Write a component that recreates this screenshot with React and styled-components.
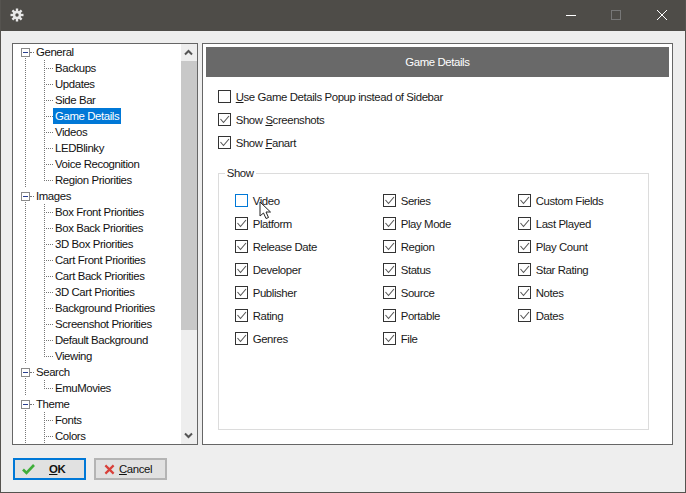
import React from 'react';
import styled, { createGlobalStyle } from 'styled-components';

const GlobalStyle = createGlobalStyle`
  html, body {
    margin: 0;
    padding: 0;
    background: #eeeeee;
  }
  body {
    font-family: "Liberation Sans", Arial, sans-serif;
    font-size: 11.4px;
    letter-spacing: -0.4px;
    color: #1a1a1a;
  }
`;

const Win = styled.div`
  position: relative;
  width: 686px;
  height: 493px;
  box-sizing: border-box;
  border: 1px solid #55534f;
  border-top: none;
  background: #eeeeee;
  display: flex;
  flex-direction: column;
  overflow: hidden;
`;

const TitleBar = styled.div`
  height: 31px;
  box-sizing: border-box;
  margin: 0 -1px;
  flex: none;
  background: #4e4c48;
  display: flex;
  align-items: center;
  padding: 0 1px 1px 10px;
`;

const WinButtons = styled.div`
  margin-left: auto;
  display: flex;
`;

const WinButton = styled.div`
  width: ${(p) => p.$w || 46}px;
  height: 30px;
  display: flex;
  align-items: center;
  justify-content: center;
`;

const Main = styled.div`
  flex: none;
  display: flex;
  gap: 4px;
  padding: 12px 12px 0 11px;
  height: 402px;
`;

const TreePanel = styled.div`
  width: 186px;
  box-sizing: border-box;
  background: #fff;
  border: 1px solid #666;
  display: flex;
  overflow: hidden;
`;

const TreeList = styled.div`
  flex: 1;
  overflow: hidden;
  padding-left: 8px;
`;

const Branch = styled.div`
  background: repeating-linear-gradient(to bottom, #777 0 1px, transparent 1px 2px) 4px 8px / 1px 100% no-repeat;
`;

const NodeRow = styled.div`
  height: 16px;
  display: flex;
  align-items: center;
`;

const Expander = styled.div`
  width: 9px;
  height: 9px;
  box-sizing: border-box;
  border: 1px solid #8a8a8a;
  background: #fff;
  flex: none;
  display: flex;
  align-items: center;
  justify-content: center;
  &::after {
    content: '';
    width: 5px;
    height: 1px;
    background: #2a3f8f;
  }
`;

const Stub = styled.div`
  width: ${(p) => p.$w}px;
  flex: none;
  border-top: 1px dotted #777;
`;

const NodeLabel = styled.span`
  padding: 0 2px;
  height: 16px;
  line-height: 16px;
  white-space: nowrap;
  background: ${(p) => (p.$selected ? '#0078d7' : 'transparent')};
  color: ${(p) => (p.$selected ? '#fff' : '#111')};
`;

const Children = styled.div`
  margin-left: 23px;
  background: repeating-linear-gradient(to bottom, #777 0 1px, transparent 1px 2px) 0 0 / 1px calc(100% - 8px) no-repeat;
  ${(p) => p.$open && 'background-size: 1px 100%;'}
`;

const ScrollBar = styled.div`
  width: 16px;
  flex: none;
  background: #eeeeee;
  display: flex;
  flex-direction: column;
`;

const ScrollArrow = styled.div`
  height: 17px;
  flex: none;
  display: flex;
  align-items: center;
  justify-content: center;
  ${(p) => p.$end && 'margin-top: auto;'}
`;

const ScrollThumb = styled.div`
  height: 269px;
  background: #c8c8c8;
`;

const Content = styled.div`
  width: 472px;
  box-sizing: border-box;
  background: #fff;
  border: 1px solid #666;
  padding: 3px;
`;

const Header = styled.div`
  height: 30px;
  background: #696969;
  color: #fff;
  display: flex;
  align-items: center;
  justify-content: center;
`;

const Options = styled.div`
  padding: 13px 0 0 12px;
  display: flex;
  flex-direction: column;
  gap: 10px;
`;

const CheckRow = styled.label`
  display: flex;
  align-items: center;
  gap: 5px;
  height: 13px;
  white-space: nowrap;
`;

const Box = styled.span`
  width: 13px;
  height: 13px;
  box-sizing: border-box;
  flex: none;
  border: 1px solid ${(p) => (p.$focus ? '#0078d7' : '#333')};
  background: #fff;
  display: flex;
  align-items: center;
  justify-content: center;
`;

const GroupBox = styled.fieldset`
  margin: 17px 0 0 12px;
  width: 431px;
  height: 264px;
  box-sizing: border-box;
  border: 1px solid #dcdcdc;
  padding: 0;
  position: relative;
`;

const GroupLegend = styled.legend`
  margin-left: 6px;
  padding: 0 2px;
  line-height: 14px;
`;

const Columns = styled.div`
  display: grid;
  grid-template-columns: 148px 135px 1fr;
  padding: 14px 0 0 16px;
`;

const Column = styled.div`
  display: flex;
  flex-direction: column;
  gap: 10px;
`;

const Cursor = styled.svg`
  position: absolute;
  left: 40px;
  top: 21px;
`;

const Footer = styled.div`
  display: flex;
  gap: 8px;
  padding: 13px 0 0 12px;
`;

const Button = styled.button`
  width: 73px;
  height: 22px;
  box-sizing: border-box;
  border: 2px solid ${(p) => (p.$primary ? '#0078d7' : '#b4b4b4')};
  background: #e1e1e1;
  font: inherit;
  letter-spacing: inherit;
  color: #111;
  padding: 0 0 0 ${(p) => (p.$primary ? 7 : 8)}px;
  display: flex;
  align-items: center;
`;

const ButtonText = styled.span`
  margin-left: ${(p) => p.$gap}px;
  font-weight: ${(p) => (p.$bold ? 700 : 400)};
`;

const Key = styled.span`
  text-decoration: underline;
`;

const Tick = () => (
  <svg width="11" height="11" viewBox="0 0 11 11">
    <path d="M1.5 5 L4.5 8.5 L10 2" fill="none" stroke="#555" strokeWidth="1.1" />
  </svg>
);

const Check = ({ checked = true, focus, children }) => (
  <CheckRow>
    <Box $focus={focus}>{checked && <Tick />}</Box>
    <span>{children}</span>
  </CheckRow>
);

const tree = [
  {
    name: 'General',
    items: ['Backups', 'Updates', 'Side Bar', 'Game Details', 'Videos', 'LEDBlinky', 'Voice Recognition', 'Region Priorities'],
  },
  {
    name: 'Images',
    items: [
      'Box Front Priorities',
      'Box Back Priorities',
      '3D Box Priorities',
      'Cart Front Priorities',
      'Cart Back Priorities',
      '3D Cart Priorities',
      'Background Priorities',
      'Screenshot Priorities',
      'Default Background',
      'Viewing',
    ],
  },
  { name: 'Search', items: ['EmuMovies'] },
  { name: 'Theme', items: ['Fonts', 'Colors'], open: true },
];

const columns = [
  ['Video', 'Platform', 'Release Date', 'Developer', 'Publisher', 'Rating', 'Genres'],
  ['Series', 'Play Mode', 'Region', 'Status', 'Source', 'Portable', 'File'],
  ['Custom Fields', 'Last Played', 'Play Count', 'Star Rating', 'Notes', 'Dates'],
];

const GearIcon = () => (
  <svg width="14" height="14" viewBox="0 0 14 14">
    <g stroke="#e8e8e8" strokeWidth="2.4">
      <line x1="7" y1="0.5" x2="7" y2="13.5" />
      <line x1="0.5" y1="7" x2="13.5" y2="7" />
      <line x1="2.4" y1="2.4" x2="11.6" y2="11.6" />
      <line x1="11.6" y1="2.4" x2="2.4" y2="11.6" />
    </g>
    <circle cx="7" cy="7" r="4.2" fill="#e8e8e8" />
    <circle cx="7" cy="7" r="1.7" fill="#4e4c48" />
  </svg>
);

const Chevron = ({ up }) => (
  <svg width="9" height="7" viewBox="0 0 9 7">
    <path d={up ? 'M1 5.5 L4.5 2 L8 5.5' : 'M1 1.5 L4.5 5 L8 1.5'} fill="none" stroke="#555" strokeWidth="2" />
  </svg>
);

export default function App() {
  return (
    <>
      <GlobalStyle />
      <Win>
        <TitleBar>
          <GearIcon />
          <WinButtons>
            <WinButton $w={44}>
              <svg width="10" height="10" viewBox="0 0 10 10"><line x1="0" y1="5.5" x2="10" y2="5.5" stroke="#fff" /></svg>
            </WinButton>
            <WinButton>
              <svg width="10" height="10" viewBox="0 0 10 10"><rect x="0.5" y="0.5" width="9" height="9" fill="none" stroke="#777" /></svg>
            </WinButton>
            <WinButton>
              <svg width="10" height="10" viewBox="0 0 10 10"><path d="M0 0 L10 10 M10 0 L0 10" stroke="#fff" /></svg>
            </WinButton>
          </WinButtons>
        </TitleBar>
        <Main>
          <TreePanel>
            <TreeList>
              {tree.map((group) => (
                <Branch key={group.name}>
                  <NodeRow>
                    <Expander />
                    <Stub $w={4} />
                    <NodeLabel>{group.name}</NodeLabel>
                  </NodeRow>
                  <Children $open={group.open}>
                    {group.items.map((item) => (
                      <NodeRow key={item}>
                        <Stub $w={9} />
                        <NodeLabel $selected={item === 'Game Details'}>{item}</NodeLabel>
                      </NodeRow>
                    ))}
                  </Children>
                </Branch>
              ))}
            </TreeList>
            <ScrollBar>
              <ScrollArrow><Chevron up /></ScrollArrow>
              <ScrollThumb />
              <ScrollArrow $end><Chevron /></ScrollArrow>
            </ScrollBar>
          </TreePanel>
          <Content>
            <Header>Game Details</Header>
            <Options>
              <Check checked={false}><Key>U</Key>se Game Details Popup instead of Sidebar</Check>
              <Check>Show <Key>S</Key>creenshots</Check>
              <Check>Show <Key>F</Key>anart</Check>
            </Options>
            <GroupBox>
              <GroupLegend>Show</GroupLegend>
              <Columns>
                {columns.map((col, i) => (
                  <Column key={i}>
                    {col.map((label) => (
                      <Check key={label} checked={label !== 'Video'} focus={label === 'Video'}>{label}</Check>
                    ))}
                  </Column>
                ))}
              </Columns>
              <Cursor width="14" height="20" viewBox="0 0 14 20">
                <path d="M1 1 L1 15 L4.5 12 L7 17.5 L9.5 16.5 L7 11 L11.5 11 Z" fill="#fff" stroke="#222" strokeWidth="1" />
              </Cursor>
            </GroupBox>
          </Content>
        </Main>
        <Footer>
          <Button $primary>
            <svg width="13" height="12" viewBox="0 0 13 12">
              <path d="M1 6.5 L4.5 10 L12 2" fill="none" stroke="#3fae3a" strokeWidth="2.6" />
            </svg>
            <ButtonText $bold $gap={14}><Key>O</Key>K</ButtonText>
          </Button>
          <Button>
            <svg width="11" height="11" viewBox="0 0 12 12">
              <path d="M1.5 1.5 L10.5 10.5 M10.5 1.5 L1.5 10.5" fill="none" stroke="#d8403a" strokeWidth="2.4" />
            </svg>
            <ButtonText $gap={4}><Key>C</Key>ancel</ButtonText>
          </Button>
        </Footer>
      </Win>
    </>
  );
}
